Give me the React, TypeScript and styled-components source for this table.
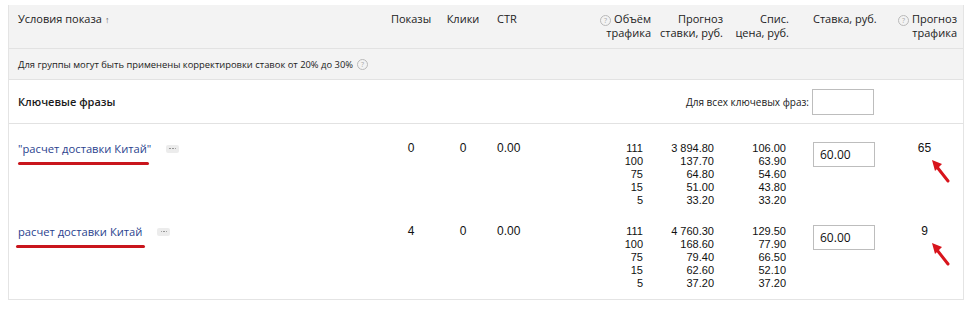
import React from "react";
import styled, { createGlobalStyle } from "styled-components";

const GlobalStyle = createGlobalStyle`
  html, body { margin: 0; padding: 0; background: #fff; }
  body { font-family: "Open Sans", "Noto Sans", Arial, sans-serif; color: #222; }
`;

const COLS = "371px 62px 42px 76px 95px 72px 66px 93px 77px";

const Table = styled.div`
  margin: 5px 0 0 8px;
  width: 954px;
  border: 1px solid #e4e4e4;
  border-top: none;
  font-size: 11px;
`;

const HeaderRow = styled.div`
  display: grid;
  grid-template-columns: ${COLS};
  background: #f3f3f3;
  height: 44px;
  border-bottom: 1px solid #e2e2e2;
  box-sizing: border-box;
  padding-top: 7px;
`;

type Align = "left" | "center" | "right";

const HeadCell = styled.div<{ $align: Align; $pl?: number; $pr?: number }>`
  display: flex;
  flex-direction: column;
  align-items: ${(p) => (p.$align === "left" ? "flex-start" : p.$align === "center" ? "center" : "flex-end")};
  padding-left: ${(p) => p.$pl ?? 0}px;
  padding-right: ${(p) => p.$pr ?? 0}px;
  line-height: 14px;
  font-size: 11px;
  color: #222;
  white-space: nowrap;
`;

const SortArrow = styled.span`
  font-size: 9px;
  color: #666;
  margin-left: 3px;
`;

const Help = styled.span`
  display: inline-flex;
  align-items: center;
  justify-content: center;
  width: 9px;
  height: 9px;
  border: 1px solid #b9b9b9;
  border-radius: 50%;
  font-size: 7px;
  line-height: 1;
  color: #aaa;
  margin-right: 3px;
  vertical-align: 0px;
`;

const NoticeRow = styled.div`
  background: #f3f3f3;
  height: 31px;
  box-sizing: border-box;
  border-bottom: 1px solid #e2e2e2;
  display: flex;
  align-items: center;
  padding-left: 9px;
  font-size: 9.4px;
  color: #222;
`;

const NoticeHelp = styled(Help)`
  margin-left: 4px;
  margin-right: 0;
`;

const KeyRow = styled.div`
  display: flex;
  align-items: center;
  height: 44px;
  box-sizing: border-box;
  border-bottom: 1px solid #e2e2e2;
  padding: 0 89px 0 9px;
`;

const KeyTitle = styled.div`
  flex: 1;
  font-size: 11px;
  font-weight: 600;
  color: #1a1a1a;
`;

const KeyLabel = styled.div`
  font-size: 10px;
  color: #222;
  margin-right: 3px;
`;

const BidInput = styled.div<{ $h: number }>`
  width: 60px;
  height: ${(p) => p.$h}px;
  border: 1px solid #bdbdbd;
  box-sizing: content-box;
  background: #fff;
  font-size: 12px;
  line-height: ${(p) => p.$h}px;
  text-indent: 6px;
  color: #111;
`;

const Body = styled.div`
  padding-bottom: 9px;
`;

const DataRow = styled.div`
  display: grid;
  grid-template-columns: ${COLS};
  padding-top: 18px;
  align-items: start;
`;

const PhraseCell = styled.div<{ $pl: number }>`
  padding-left: ${(p) => p.$pl}px;
  display: flex;
  flex-direction: column;
  align-items: flex-start;
`;

const PhraseLine = styled.div`
  display: flex;
  align-items: center;
  height: 13px;
`;

const PhraseLink = styled.a`
  font-size: 11.2px;
  color: #2a3f8e;
  text-decoration: none;
  line-height: 13px;
`;

const More = styled.span<{ $ml: number }>`
  display: inline-flex;
  align-items: center;
  justify-content: center;
  gap: 1px;
  margin-left: ${(p) => p.$ml}px;
  width: 13px;
  height: 8px;
  border-radius: 2px;
  background: #ececec;
`;

const Dot = styled.span`
  width: 1.6px;
  height: 1.6px;
  border-radius: 50%;
  background: #8a8a8a;
`;

const RedMark = styled.div<{ $w: number; $ml: number }>`
  width: ${(p) => p.$w}px;
  height: 3px;
  margin-left: ${(p) => p.$ml}px;
  margin-top: 7px;
  background: #c9151c;
  border-radius: 2px;
`;

const Num = styled.div<{ $align: Align; $pl?: number }>`
  text-align: ${(p) => p.$align};
  padding-left: ${(p) => p.$pl ?? 0}px;
  font-family: "Liberation Sans", Arial, sans-serif;
  font-size: 12px;
  line-height: 13px;
  color: #111;
`;

const Stack = styled.div<{ $pr: number }>`
  display: flex;
  flex-direction: column;
  align-items: flex-end;
  padding-right: ${(p) => p.$pr}px;
  font-family: "Liberation Sans", Arial, sans-serif;
  font-size: 11px;
  line-height: 13px;
  color: #111;
`;

const BidCell = styled.div`
  padding-left: 20px;
`;

const ForecastCell = styled.div`
  display: flex;
  flex-direction: column;
  align-items: center;
  font-family: "Liberation Sans", Arial, sans-serif;
  font-size: 12px;
  line-height: 13px;
  color: #111;
`;

const ArrowSvg = styled.svg`
  margin-top: 4px;
  margin-left: 33px;
  display: block;
`;

const RedArrow = () => (
  <ArrowSvg width="20" height="24" viewBox="0 0 20 24">
    <path d="M17 22 L6 8" stroke="#d8141c" strokeWidth="3" strokeLinecap="round" />
    <polygon points="1,1 11,5 4,12" fill="#d8141c" />
  </ArrowSvg>
);

type RowData = {
  phrase: string;
  markW: number;
  markMl: number;
  shows: string;
  clicks: string;
  ctr: string;
  volume: string[];
  bids: string[];
  prices: string[];
  bid: string;
  forecast: string;
};

const rows: RowData[] = [
  {
    phrase: "\"расчет доставки Китай\"",
    markW: 131,
    markMl: 0,
    shows: "0",
    clicks: "0",
    ctr: "0.00",
    volume: ["111", "100", "75", "15", "5"],
    bids: ["3 894.80", "137.70", "64.80", "51.00", "33.20"],
    prices: ["106.00", "63.90", "54.60", "43.80", "33.20"],
    bid: "60.00",
    forecast: "65",
  },
  {
    phrase: "расчет доставки Китай",
    markW: 129,
    markMl: -2,
    shows: "4",
    clicks: "0",
    ctr: "0.00",
    volume: ["111", "100", "75", "15", "5"],
    bids: ["4 760.30", "168.60", "79.40", "62.60", "37.20"],
    prices: ["129.50", "77.90", "66.50", "52.10", "37.20"],
    bid: "60.00",
    forecast: "9",
  },
];

export default function App() {
  return (
    <>
      <GlobalStyle />
      <Table>
        <HeaderRow>
          <HeadCell $align="left" $pl={9}>
            <span>
              Условия показа<SortArrow>↑</SortArrow>
            </span>
          </HeadCell>
          <HeadCell $align="center">Показы</HeadCell>
          <HeadCell $align="center">Клики</HeadCell>
          <HeadCell $align="left" $pl={13}>CTR</HeadCell>
          <HeadCell $align="right" $pr={4}>
            <span>
              <Help>?</Help>Объём
            </span>
            <span>трафика</span>
          </HeadCell>
          <HeadCell $align="right" $pr={4}>
            <span>Прогноз</span>
            <span>ставки, руб.</span>
          </HeadCell>
          <HeadCell $align="right" $pr={4}>
            <span>Спис.</span>
            <span>цена, руб.</span>
          </HeadCell>
          <HeadCell $align="left" $pl={20}>Ставка, руб.</HeadCell>
          <HeadCell $align="right" $pr={6}>
            <span>
              <Help>?</Help>Прогноз
            </span>
            <span>трафика</span>
          </HeadCell>
        </HeaderRow>
        <NoticeRow>
          Для группы могут быть применены корректировки ставок от 20% до 30%
          <NoticeHelp>?</NoticeHelp>
        </NoticeRow>
        <KeyRow>
          <KeyTitle>Ключевые фразы</KeyTitle>
          <KeyLabel>Для всех ключевых фраз:</KeyLabel>
          <BidInput $h={24} />
        </KeyRow>
        <Body>
          {rows.map((r, i) => (
            <DataRow key={i}>
              <PhraseCell $pl={9}>
                <PhraseLine>
                  <PhraseLink href="#">{r.phrase}</PhraseLink>
                  <More $ml={15}>
                    <Dot />
                    <Dot />
                    <Dot />
                  </More>
                </PhraseLine>
                <RedMark $w={r.markW} $ml={r.markMl} />
              </PhraseCell>
              <Num $align="center">{r.shows}</Num>
              <Num $align="center">{r.clicks}</Num>
              <Num $align="left" $pl={13}>{r.ctr}</Num>
              <Stack $pr={12}>
                {r.volume.map((v, j) => (
                  <span key={j}>{v}</span>
                ))}
              </Stack>
              <Stack $pr={13}>
                {r.bids.map((v, j) => (
                  <span key={j}>{v}</span>
                ))}
              </Stack>
              <Stack $pr={7}>
                {r.prices.map((v, j) => (
                  <span key={j}>{v}</span>
                ))}
              </Stack>
              <BidCell>
                <BidInput $h={23}>{r.bid}</BidInput>
              </BidCell>
              <ForecastCell>
                <span>{r.forecast}</span>
                <RedArrow />
              </ForecastCell>
            </DataRow>
          ))}
        </Body>
      </Table>
    </>
  );
}
